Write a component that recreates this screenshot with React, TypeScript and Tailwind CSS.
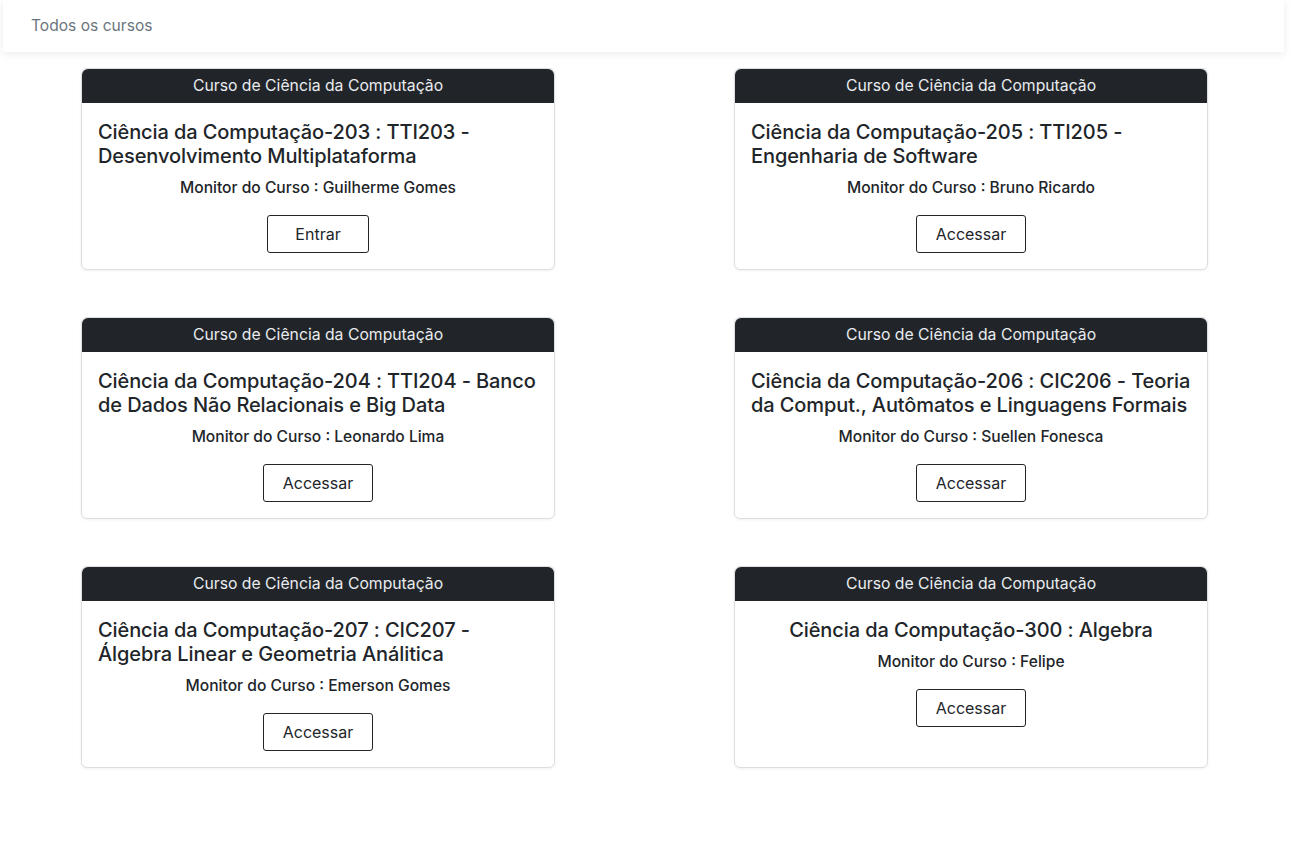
const courses = [
  { title: "Ciência da Computação-203 : TTI203 - Desenvolvimento Multiplataforma", monitor: "Guilherme Gomes", action: "Entrar" },
  { title: "Ciência da Computação-205 : TTI205 - Engenharia de Software", monitor: "Bruno Ricardo", action: "Accessar" },
  { title: "Ciência da Computação-204 : TTI204 - Banco de Dados Não Relacionais e Big Data", monitor: "Leonardo Lima", action: "Accessar" },
  { title: "Ciência da Computação-206 : CIC206 - Teoria da Comput., Autômatos e Linguagens Formais", monitor: "Suellen Fonesca", action: "Accessar" },
  { title: "Ciência da Computação-207 : CIC207 - Álgebra Linear e Geometria Análitica", monitor: "Emerson Gomes", action: "Accessar" },
  { title: "Ciência da Computação-300 : Algebra", monitor: "Felipe", action: "Accessar" },
];

function CourseCard({ title, monitor, action }: { title: string; monitor: string; action: string }) {
  return (
    <div className="flex flex-col rounded-md border border-[#dcdee0] bg-white shadow-[0_1px_3px_rgba(0,0,0,0.06)]">
      <div className="h-[34px] rounded-t-md bg-[#212529] flex items-center justify-center text-[15.75px] text-[#e9ecef]">
        Curso de Ciência da Computação
      </div>
      <div className="flex flex-col items-center px-4 pt-[17px] pb-4">
        <h5 className="w-fit text-left text-[20px] font-medium leading-6 tracking-[-0.1px] text-[#212529]">{title}</h5>
        <p className="mt-2 text-[15.6px] font-medium leading-6 text-[#212529]">
          Monitor do Curso : {monitor}
        </p>
        <button
          className={
            action === "Entrar"
              ? "mt-[15px] h-[38px] w-[102px] rounded-[3px] border border-[#212529] bg-white text-base text-[#212529]"
              : "mt-[15px] h-[38px] w-[110px] rounded-[3px] border border-[#212529] bg-white text-base text-[#212529]"
          }
        >
          {action}
        </button>
      </div>
    </div>
  );
}

export default function App() {
  return (
    <div className="min-h-[845px] bg-white" style={{ fontFamily: "Inter, 'Noto Sans', sans-serif" }}>
      <div className="mx-[3px] w-[1281px] h-[52px] flex items-center bg-white pl-7 text-[15.6px] text-[#6c757d] shadow-[0_2px_8px_rgba(0,0,0,0.08)]">
        Todos os cursos
      </div>
      <div className="ml-[81px] mt-4 grid grid-cols-[474px_474px] gap-x-[179px] gap-y-[47px]">
        {courses.map((c) => (
          <CourseCard key={c.title} {...c} />
        ))}
      </div>
    </div>
  );
}
